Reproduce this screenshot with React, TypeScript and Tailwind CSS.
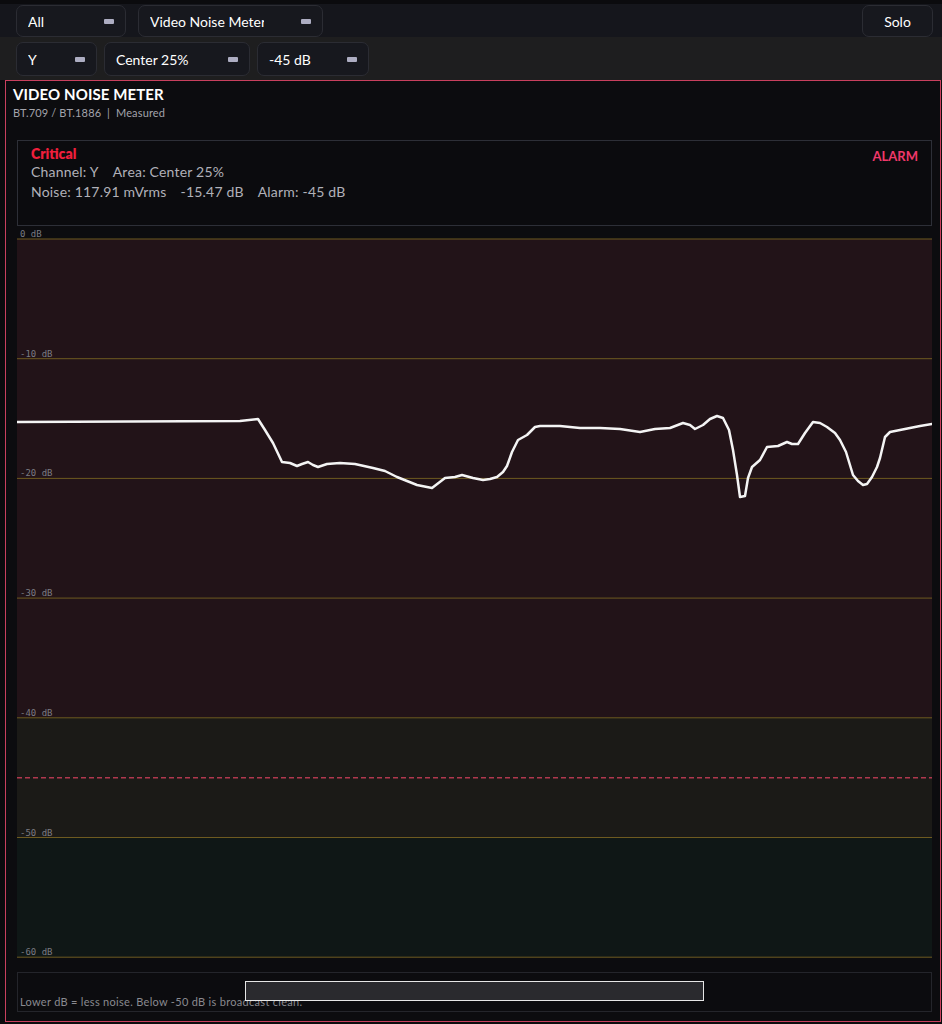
const font = { fontFamily: 'Lato, "Open Sans", sans-serif' }

const wave: [number, number][] = [
  [17, 422], [240, 421], [258, 419], [265, 430], [273, 443], [282, 462], [290, 463], [297, 466],
  [302, 464], [308, 462], [313, 465], [318, 467], [327, 464], [340, 463], [355, 464], [373, 468],
  [385, 471], [397, 477], [417, 485], [432, 488], [445, 478], [455, 477], [462, 475], [473, 478],
  [483, 480], [490, 479], [497, 477], [503, 472], [507, 466], [512, 452], [518, 440], [527, 435],
  [535, 427], [540, 426], [560, 426], [580, 428], [600, 428], [620, 429], [640, 432], [655, 429],
  [670, 428], [683, 423], [690, 425], [695, 429], [703, 425], [710, 419], [717, 416], [723, 418],
  [729, 430], [733, 450], [737, 475], [740, 497], [745, 496], [748, 478], [752, 467], [760, 460],
  [767, 447], [778, 446], [787, 442], [792, 444], [798, 444], [805, 433], [813, 422], [820, 423],
  [827, 427], [835, 433], [840, 440], [846, 452], [853, 475], [858, 481], [863, 485], [867, 484],
  [872, 477], [877, 467], [880, 458], [885, 437], [890, 432], [900, 430], [910, 428], [920, 426],
  [932, 424],
]

const grid = [0, -10, -20, -30, -40, -50, -60]
const yOf = (db: number) => 11 + (-db) * 11.97

function Select({ label, w, tw }: { label: string; w: string; tw: string }) {
  return (
    <div className={`${w} h-full flex items-center justify-between pl-[11px] pr-[11px] rounded-[7px] border border-[#2b2c33] bg-[#17181e]`}>
      <span className={`${tw} overflow-hidden whitespace-nowrap text-[14px] text-white`}>{label}</span>
      <span className="w-[10px] h-[5px] rounded-[1px] bg-[#adadc2]" />
    </div>
  )
}

export default function App() {
  return (
    <div className="min-h-screen bg-[#0b0b0e] pt-[4px] pb-[2px]" style={font}>
      <div className="h-[33px] bg-[#15161c] flex items-start pt-[1px] pl-[16px] pr-[9px] gap-[12px]">
        <div className="h-[32px] flex gap-[12px]">
          <Select label="All" w="w-[110px]" tw="w-[60px]" />
          <Select label="Video Noise Meter" w="w-[185px]" tw="w-[114px]" />
        </div>
        <button className="ml-auto h-[32px] w-[71px] rounded-[7px] border border-[#2b2c33] bg-[#17181e] text-[14px] text-white">
          Solo
        </button>
      </div>
      <div className="h-[43px] bg-[#1e1e1f] flex items-start pt-[5px] pl-[16px] gap-[7px]">
        <div className="h-[34px] flex gap-[7px]">
          <Select label="Y" w="w-[81px]" tw="w-[30px]" />
          <Select label="Center 25%" w="w-[146px]" tw="w-[100px]" />
          <Select label="-45 dB" w="w-[112px]" tw="w-[70px]" />
        </div>
      </div>

      <div className="ml-[5px] mr-[1px] border border-[#c9405e] bg-[#0c0c0f] pb-[9px]">
        <div className="px-[7px] pt-[3px]">
          <div className="text-[15px] leading-[20px] font-bold text-white tracking-[0.1px]">VIDEO NOISE METER</div>
          <div className="text-[11px] leading-[14px] mt-[2px] text-[#a3a3ab] tracking-[0.15px]">BT.709 / BT.1886&nbsp;&nbsp;|&nbsp;&nbsp;Measured</div>
        </div>

        <div className="pl-[11px] pr-[8px]">
          <div className="mt-[20px] h-[86px] border border-[#2d2f37] bg-[#0b0b0e] px-[13px] pt-[4px] flex justify-between">
            <div>
              <div className="text-[14px] leading-[18px] font-extrabold text-[#ef1f3c]">Critical</div>
              <div className="text-[14px] leading-[18px] text-[#b1b1b9] tracking-[0.2px] flex gap-[14px]">
                <span>Channel: Y</span>
                <span>Area: Center 25%</span>
              </div>
              <div className="mt-[2px] text-[14px] leading-[18px] text-[#b1b1b9] tracking-[0.2px] flex gap-[14px]">
                <span>Noise: 117.91 mVrms</span>
                <span>-15.47 dB</span>
                <span>Alarm: -45 dB</span>
              </div>
            </div>
            <div className="pt-[3px] text-[13px] leading-[16px] font-bold text-[#f0386a]">ALARM</div>
          </div>

          <div className="mt-[2px]">
            <svg width="915" height="732" viewBox="0 0 915 732" className="block">
              <rect x="0" y={yOf(0)} width="915" height={yOf(-40) - yOf(0)} fill="#221318" />
              <rect x="0" y={yOf(-40)} width="915" height={yOf(-50) - yOf(-40)} fill="#1b1a17" />
              <rect x="0" y={yOf(-50)} width="915" height={yOf(-60) - yOf(-50)} fill="#0f1716" />
              {grid.map((db) => (
                <g key={db}>
                  <line x1="0" x2="915" y1={yOf(db)} y2={yOf(db)} stroke="#6e5a20" strokeWidth="1" />
                  <text
                    x="3"
                    y={yOf(db) - 2}
                    fontSize="9"
                    fill="#7b7b82"
                    style={{ fontFamily: '"DejaVu Sans Mono", "Liberation Mono", monospace' }}
                  >
                    {db === 0 ? '0 dB' : `${db} dB`}
                  </text>
                </g>
              ))}
              <line x1="0" x2="915" y1={yOf(-45)} y2={yOf(-45)} stroke="#b0384f" strokeWidth="1.5" strokeDasharray="5 3" />
              <polyline
                points={wave.map(([x, y]) => `${x - 17},${y - 228}`).join(' ')}
                fill="none"
                stroke="#f4f4f4"
                strokeWidth="2.5"
                strokeLinejoin="round"
                strokeLinecap="round"
              />
            </svg>
          </div>

          <div className="relative mt-[12px] h-[40px] border border-[#24252b] flex items-end pl-[2px] pb-[2px]">
            <span className="text-[11px] leading-[14px] text-[#8a8a90] tracking-[0.3px]">
              Lower dB = less noise. Below -50 dB is broadcast clean.
            </span>
            <div className="absolute left-[227px] top-[8px] w-[459px] h-[20px] border border-[#e6e6e6] bg-[#2a2a2e]" />
          </div>
        </div>
      </div>
    </div>
  )
}
